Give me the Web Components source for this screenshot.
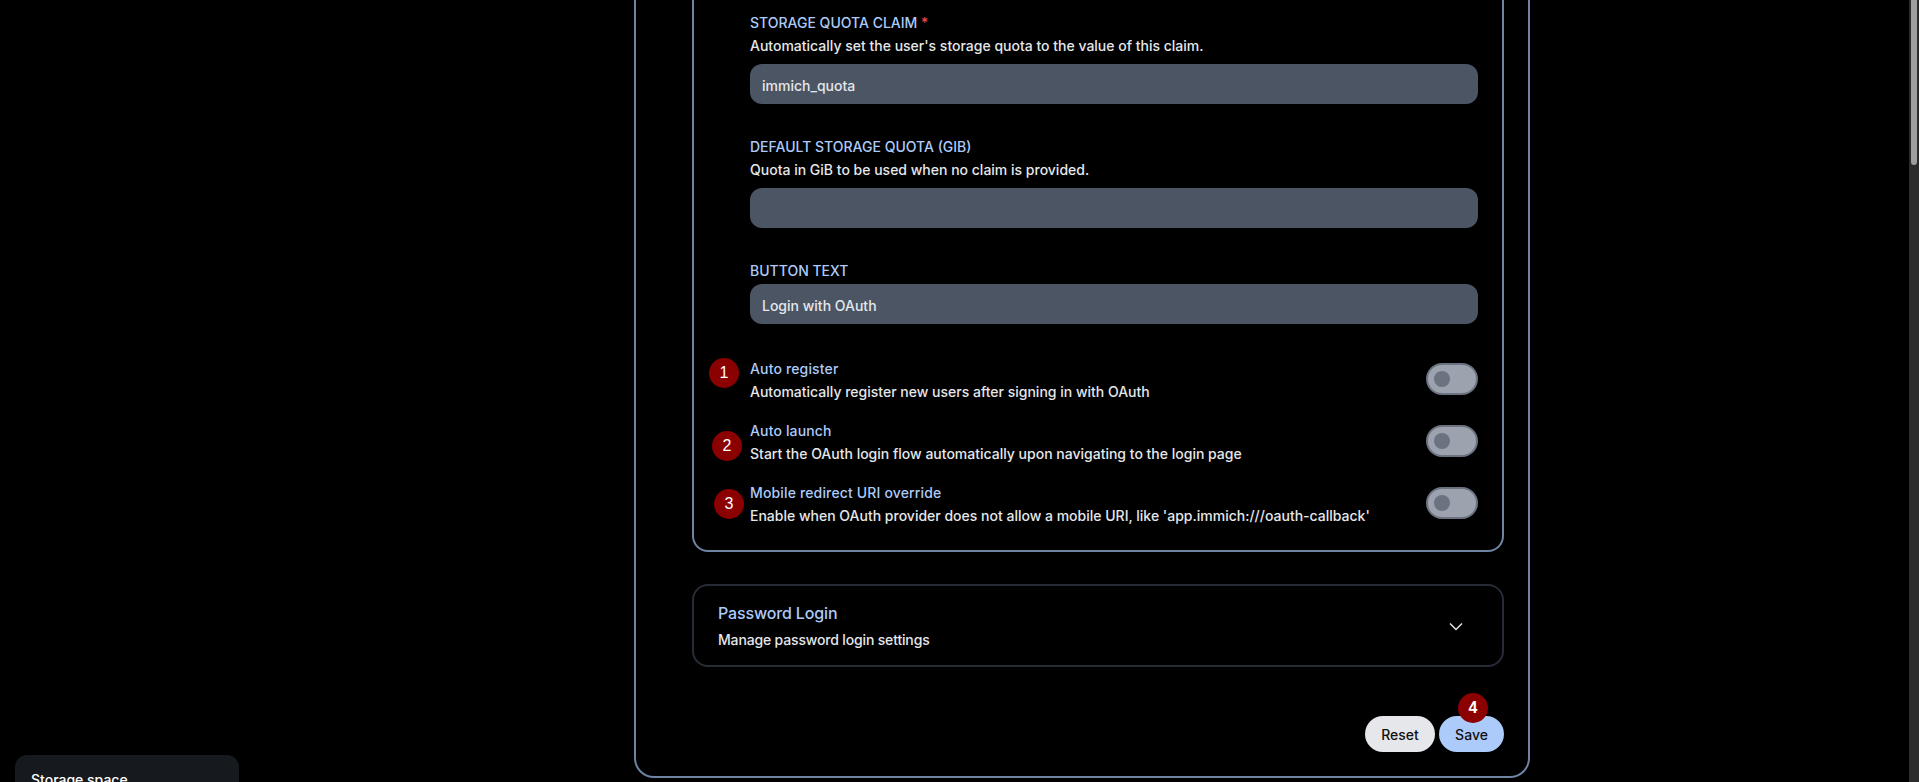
<!DOCTYPE html>
<html lang="en">
<head>
<meta charset="utf-8">
<title>OAuth settings</title>
<style>
  html, body { margin: 0; height: 100%; background: #000; overflow: hidden; }
  body { font-family: Inter, Roboto, "Liberation Sans", sans-serif; font-size: 14px; color: #e5e7eb; }
</style>
</head>
<body>
<app-shell>
  <storage-card slot="side">Storage space</storage-card>
  <settings-panel>
    <settings-group>
      <text-field label="Storage quota claim" required desc="Automatically set the user's storage quota to the value of this claim.">immich_quota</text-field>
      <text-field label="Default storage quota (GiB)" desc="Quota in GiB to be used when no claim is provided."></text-field>
      <text-field label="Button text">Login with OAuth</text-field>
      <switch-row slot="switches" step="1" badge-x="-41" badge-y="-1" label="Auto register" desc="Automatically register new users after signing in with OAuth"></switch-row>
      <switch-row slot="switches" step="2" badge-x="-38" badge-y="10" label="Auto launch" desc="Start the OAuth login flow automatically upon navigating to the login page"></switch-row>
      <switch-row slot="switches" step="3" badge-x="-36" badge-y="6" label="Mobile redirect URI override" desc="Enable when OAuth provider does not allow a mobile URI, like 'app.immich:///oauth-callback'"></switch-row>
    </settings-group>
    <collapsed-card label="Password Login" desc="Manage password login settings"></collapsed-card>
    <form-actions></form-actions>
  </settings-panel>
</app-shell>

<script>
class AppShell extends HTMLElement {
  constructor() {
    super();
    this.attachShadow({ mode: "open" });
  }

  connectedCallback() {
    this.shadowRoot.innerHTML = `
      <style>
        :host { display: flex; height: 782px; overflow: hidden; background: #000; }
        .side { width: 634px; flex: none; display: flex; flex-direction: column; justify-content: flex-end; }
        .main { width: 896px; flex: none; }
        .rest { flex: 1; }
      </style>
      <div class="side"><slot name="side"></slot></div>
      <div class="main"><slot></slot></div>
      <div class="rest"></div>
      <page-scrollbar></page-scrollbar>
    `;
  }
}

class PageScrollbar extends HTMLElement {
  constructor() {
    super();
    this.attachShadow({ mode: "open" });
  }

  connectedCallback() {
    this.shadowRoot.innerHTML = `
      <style>
        :host { display: block; width: 10px; flex: none; background: #2c2c2c; }
        div { width: 6px; height: 165px; margin: 0 2px; background: #9e9e9e; border-radius: 0 0 3px 3px; }
      </style>
      <div></div>
    `;
  }
}

class StorageCard extends HTMLElement {
  constructor() {
    super();
    this.attachShadow({ mode: "open" });
  }

  connectedCallback() {
    this.shadowRoot.innerHTML = `
      <style>
        :host { display: block; box-sizing: border-box; width: 224px; height: 27px; margin-left: 15px; padding: 15px 16px 0;
          background: #16191d; border-radius: 12px 12px 0 0; overflow: hidden; color: #fff; font-weight: 500; font-size: 14px; line-height: 20px; }
      </style>
      <slot></slot>
    `;
  }
}

class SettingsPanel extends HTMLElement {
  constructor() {
    super();
    this.attachShadow({ mode: "open" });
  }

  connectedCallback() {
    this.shadowRoot.innerHTML = `
      <style>
        :host { display: flex; flex-direction: column; box-sizing: border-box; height: 778px; padding: 0 24px 24px 56px;
          border: 2px solid #6f83a3; border-top: 0; border-radius: 0 0 20px 20px; }
      </style>
      <slot></slot>
    `;
  }
}

class SettingsGroup extends HTMLElement {
  constructor() {
    super();
    this.attachShadow({ mode: "open" });
  }

  connectedCallback() {
    this.shadowRoot.innerHTML = `
      <style>
        :host { display: block; box-sizing: border-box; height: 552px; padding: 12px 24px 0 56px;
          border: 2px solid #6f83a3; border-top: 0; border-radius: 0 0 16px 16px; }
        .fields { display: flex; flex-direction: column; gap: 32px; }
        .fields ::slotted(text-field:last-child) { margin-top: -4px; }
        .switches { display: flex; flex-direction: column; gap: 19px; margin-top: 35px; }
      </style>
      <div class="fields"><slot></slot></div>
      <div class="switches"><slot name="switches"></slot></div>
    `;
  }
}

class TextField extends HTMLElement {
  constructor() {
    super();
    this.attachShadow({ mode: "open" });
  }

  connectedCallback() {
    const desc = this.getAttribute("desc");
    const star = this.hasAttribute("required") ? `<span class="star">*</span>` : "";
    this.shadowRoot.innerHTML = `
      <style>
        :host { display: block; }
        .label { padding-top: 1px; margin-bottom: -1px; color: #adcbfa; font-size: 14px; line-height: 20px; font-weight: 500; text-transform: uppercase; }
        .star { color: #ef4444; }
        .desc { margin-top: 4px; color: #e5e7eb; font-size: 14px; line-height: 20px; font-weight: 500; }
        .box { box-sizing: border-box; height: 40px; margin-top: ${desc ? 8 : 4}px; padding: 4px 12px 0; background: #4b5563; border-radius: 12px;
          color: #e5e7eb; font-size: 14px; line-height: 36px; font-weight: 500; }
      </style>
      <div class="label">${this.getAttribute("label")} ${star}</div>
      ${desc ? `<div class="desc">${desc}</div>` : ""}
      <div class="box"><slot></slot></div>
    `;
  }
}

class SwitchRow extends HTMLElement {
  constructor() {
    super();
    this.attachShadow({ mode: "open" });
  }

  connectedCallback() {
    this.shadowRoot.innerHTML = `
      <style>
        :host { display: flex; justify-content: space-between; position: relative; }
        .label { color: #adcbfa; font-size: 14px; line-height: 20px; font-weight: 500; letter-spacing: 0.15px; }
        .desc { margin-top: 3px; color: #e5e7eb; font-size: 14px; line-height: 20px; font-weight: 500; }
        .track { box-sizing: border-box; width: 52px; height: 32px; margin-top: 4px; background: #9ca3af; border: 2px solid #6b7280; border-radius: 16px;
          display: flex; align-items: center; padding-left: 6px; }
        .knob { width: 16px; height: 16px; border-radius: 50%; background: #6b7280; }
        step-badge { position: absolute; top: ${this.getAttribute("badge-y")}px; left: ${this.getAttribute("badge-x")}px; }
      </style>
      <div>
        <div class="label">${this.getAttribute("label")}</div>
        <div class="desc">${this.getAttribute("desc")}</div>
      </div>
      <div class="track"><div class="knob"></div></div>
      <step-badge>${this.getAttribute("step")}</step-badge>
    `;
  }
}

class StepBadge extends HTMLElement {
  constructor() {
    super();
    this.attachShadow({ mode: "open" });
  }

  connectedCallback() {
    this.shadowRoot.innerHTML = `
      <style>
        :host { display: flex; align-items: center; justify-content: center; width: 30px; height: 30px; border-radius: 50%;
          background: #8b0000; color: #fff; font: 16px "Liberation Sans", sans-serif; }
      </style>
      <slot></slot>
    `;
  }
}

class CollapsedCard extends HTMLElement {
  constructor() {
    super();
    this.attachShadow({ mode: "open" });
  }

  connectedCallback() {
    this.shadowRoot.innerHTML = `
      <style>
        :host { display: flex; align-items: center; justify-content: space-between; box-sizing: border-box; height: 83px; margin-top: 32px; padding: 0 24px;
          border: 2px solid #262b35; border-radius: 16px; }
        .label { margin-top: -1px; color: #adcbfa; font-size: 16px; line-height: 24px; font-weight: 500; letter-spacing: -0.15px; }
        .desc { margin-top: 5px; color: #e5e7eb; font-size: 14px; line-height: 20px; font-weight: 500; letter-spacing: -0.16px; }
        svg { display: block; margin-right: 10px; }
      </style>
      <div>
        <div class="label">${this.getAttribute("label")}</div>
        <div class="desc">${this.getAttribute("desc")}</div>
      </div>
      <svg width="24" height="24" viewBox="0 0 24 24" fill="none" stroke="#e5e7eb" stroke-width="1.4"><path d="M6 9.5L12 15.5L18 9.5"/></svg>
    `;
  }
}

class FormActions extends HTMLElement {
  constructor() {
    super();
    this.attachShadow({ mode: "open" });
  }

  connectedCallback() {
    this.shadowRoot.innerHTML = `
      <style>
        :host { display: flex; justify-content: flex-end; gap: 4px; margin-top: 49px; position: relative; }
        button { box-sizing: border-box; height: 36px; padding: 0; border: 0; border-radius: 18px; color: #111; font: 500 14px Inter, Roboto, "Liberation Sans", sans-serif; }
        .reset { width: 70px; background: #e5e7eb; }
        .save { width: 65px; background: #adcbfa; }
        step-badge { position: absolute; right: 16px; top: -23px; font-weight: bold; }
      </style>
      <button class="reset">Reset</button>
      <button class="save">Save</button>
      <step-badge>4</step-badge>
    `;
  }
}

customElements.define("app-shell", AppShell);
customElements.define("page-scrollbar", PageScrollbar);
customElements.define("storage-card", StorageCard);
customElements.define("settings-panel", SettingsPanel);
customElements.define("settings-group", SettingsGroup);
customElements.define("text-field", TextField);
customElements.define("switch-row", SwitchRow);
customElements.define("step-badge", StepBadge);
customElements.define("collapsed-card", CollapsedCard);
customElements.define("form-actions", FormActions);
</script>
</body>
</html>
